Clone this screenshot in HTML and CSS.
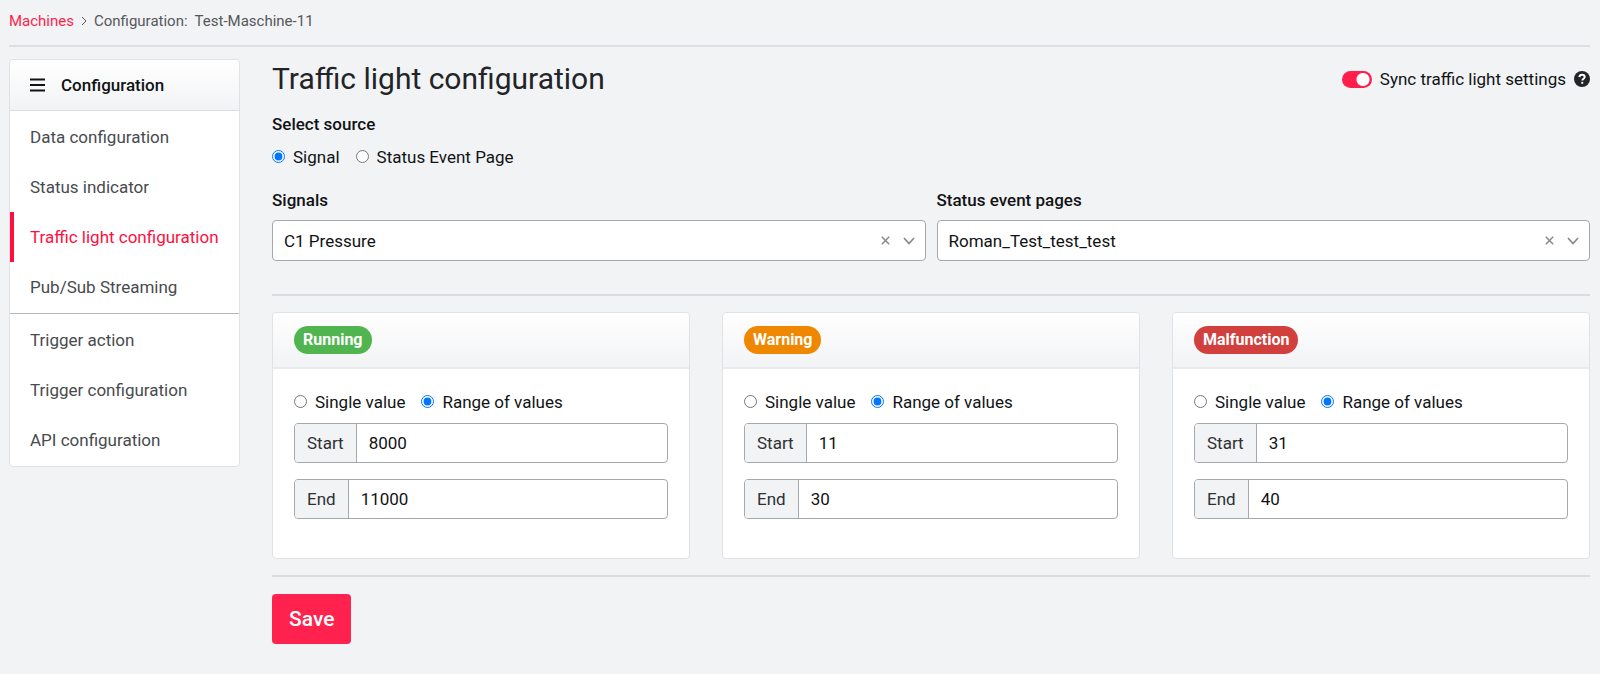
FILE: index.html
```html
<!DOCTYPE html>
<html lang="en">
<head>
<meta charset="utf-8">
<title>Traffic light configuration</title>
<link rel="stylesheet" href="styles.css">
</head>
<body>
<nav class="breadcrumb" aria-label="Breadcrumb">
  <a href="#">Machines</a>
  <svg class="crumb-arrow" viewBox="0 0 6 10" aria-hidden="true"><path d="M1 1l4 4-4 4"/></svg>
  <span>Configuration:</span>
  <span class="machine">Test-Maschine-11</span>
</nav>
<div class="layout">
  <aside class="sidebar">
    <div class="sidebar-head">
      <svg class="burger" viewBox="0 0 15 14" aria-hidden="true"><path d="M0 1.5h15M0 7h15M0 12.5h15"/></svg>
      <span>Configuration</span>
    </div>
    <nav class="menu">
      <a href="#">Data configuration</a>
      <a href="#">Status indicator</a>
      <a href="#" class="active" aria-current="page">Traffic light configuration</a>
      <a href="#">Pub/Sub Streaming</a>
    </nav>
    <nav class="menu menu-second">
      <a href="#">Trigger action</a>
      <a href="#">Trigger configuration</a>
      <a href="#">API configuration</a>
    </nav>
  </aside>
  <main class="content">
    <header class="title-row">
      <h1>Traffic light configuration</h1>
      <div class="sync">
        <label class="sync-label"><input type="checkbox" class="switch" checked><span>Sync traffic light settings</span></label>
        <button type="button" class="help" aria-label="Help"><svg viewBox="0 0 16 16" aria-hidden="true"><circle cx="8" cy="8" r="8"/><path d="M5.4 6.1C5.6 4.6 6.6 3.8 8 3.8c1.5 0 2.7.9 2.7 2.2 0 1.7-2.4 1.7-2.4 3.4"/><rect x="7.2" y="10.7" width="2.1" height="2.1" rx=".9"/></svg></button>
      </div>
    </header>
    <fieldset class="source">
      <legend>Select source</legend>
      <div class="radios">
        <label><input type="radio" name="source" checked>Signal</label>
        <label><input type="radio" name="source">Status Event Page</label>
      </div>
    </fieldset>
    <div class="selects">
      <div class="field">
        <label for="signals">Signals</label>
        <div class="select-wrap">
          <select id="signals"><option>C1 Pressure</option></select>
          <div class="indicators">
            <button type="button" aria-label="Clear signal"><svg class="clear" viewBox="0 0 9 9"><path stroke-width="1.5" d="M.8.8l7.4 7.4M8.2.8L.8 8.200"/></svg></button>
            <svg class="chevron" viewBox="0 0 12 8" aria-hidden="true"><path stroke-width="1.7" d="M1 1l5 5.5L11 1"/></svg>
          </div>
        </div>
      </div>
      <div class="field">
        <label for="pages">Status event pages</label>
        <div class="select-wrap">
          <select id="pages"><option>Roman_Test_test_test</option></select>
          <div class="indicators">
            <button type="button" aria-label="Clear page"><svg class="clear" viewBox="0 0 9 9"><path stroke-width="1.5" d="M.8.8l7.4 7.4M8.2.8L.8 8.200"/></svg></button>
            <svg class="chevron" viewBox="0 0 12 8" aria-hidden="true"><path stroke-width="1.7" d="M1 1l5 5.5L11 1"/></svg>
          </div>
        </div>
      </div>
    </div>
    <div class="cards">
      <section class="card">
        <header><h2 class="badge running">Running</h2></header>
        <div class="card-body">
          <div class="radios">
            <label><input type="radio" name="running">Single value</label>
            <label><input type="radio" name="running" checked>Range of values</label>
          </div>
          <div class="group"><label for="r-start">Start</label><input id="r-start" type="text" value="8000"></div>
          <div class="group"><label for="r-end">End</label><input id="r-end" type="text" value="11000"></div>
        </div>
      </section>
      <section class="card">
        <header><h2 class="badge warning">Warning</h2></header>
        <div class="card-body">
          <div class="radios">
            <label><input type="radio" name="warning">Single value</label>
            <label><input type="radio" name="warning" checked>Range of values</label>
          </div>
          <div class="group"><label for="w-start">Start</label><input id="w-start" type="text" value="11"></div>
          <div class="group"><label for="w-end">End</label><input id="w-end" type="text" value="30"></div>
        </div>
      </section>
      <section class="card">
        <header><h2 class="badge malfunction">Malfunction</h2></header>
        <div class="card-body">
          <div class="radios">
            <label><input type="radio" name="malfunction">Single value</label>
            <label><input type="radio" name="malfunction" checked>Range of values</label>
          </div>
          <div class="group"><label for="m-start">Start</label><input id="m-start" type="text" value="31"></div>
          <div class="group"><label for="m-end">End</label><input id="m-end" type="text" value="40"></div>
        </div>
      </section>
    </div>
    <button type="button" class="save">Save</button>
  </main>
</div>
</body>
</html>
```
FILE: styles.css
```css
* { box-sizing: border-box; }
body {
  margin: 0;
  padding: 0 10px 0 9px;
  background: #f2f3f5;
  color: #111315;
  font: 17px/24px Roboto, "Liberation Sans", sans-serif;
}
input, select, button { font: inherit; color: inherit; }
a { text-decoration: none; }
svg { display: block; fill: none; stroke: currentColor; }

.breadcrumb {
  display: flex;
  align-items: center;
  gap: 7px;
  height: 47px;
  padding-bottom: 3px;
  border-bottom: 2px solid #dcdee1;
  font-size: 15px;
  color: #55585b;
}
.breadcrumb a { color: #ff1f4b; }
.crumb-arrow { width: 6px; height: 10px; }

.layout {
  display: grid;
  grid-template-columns: 231px 1fr;
  align-items: start;
  gap: 32px;
  padding-top: 12px;
}
.sidebar {
  background: #fff;
  border: 1px solid #e0e2e5;
  border-radius: 4px;
}
.sidebar-head {
  display: flex;
  align-items: center;
  gap: 16px;
  height: 51px;
  padding: 0 20px;
  border-bottom: 1px solid #dcdee1;
  border-radius: 4px 4px 0 0;
  background: linear-gradient(#fff, #f2f3f5);
  font-weight: 500;
}
.burger { width: 15px; height: 14px; stroke-width: 2; }
.menu { padding: 1px 0; }
.menu-second { border-top: 1px solid #b5b8bb; }
.menu a {
  display: block;
  padding: 13px 16px;
  border-left: 4px solid transparent;
  color: #484b4e;
}
.menu .active { border-color: #ff0f40; color: #ff0f40; }

.title-row { display: flex; justify-content: space-between; align-items: center; height: 40px; }
h1 { margin: 0; font-size: 30px; line-height: 40px; font-weight: 400; color: #222427; }
.sync, .sync-label { display: flex; align-items: center; gap: 8px; }
.switch {
  appearance: none;
  width: 30px;
  height: 17px;
  margin: 0;
  border-radius: 9px;
  background: radial-gradient(circle at 21px 50%, #fff 6px, transparent 7px) #ff1f4b;
}
.help { border: 0; padding: 0; background: none; }
.help svg { width: 16px; height: 16px; }
.help circle, .help rect { stroke: none; fill: #222427; }
.help rect { fill: #fff; }
.help path { stroke: #fff; stroke-width: 2; }

.source { margin: 13px 0 0; padding: 0; border: 0; }
.source legend, .field > label { padding: 0; font-weight: 500; }
.source .radios { padding-top: 9px; }
.radios { display: flex; gap: 16px; }
.radios label { display: flex; align-items: center; gap: 8px; }
.radios input { width: 13px; height: 13px; margin: 0 0 2px; }

.selects { display: grid; grid-template-columns: 1fr 1fr; gap: 11px; padding-top: 19px; }
.field { display: grid; gap: 8px; }
.select-wrap { position: relative; }
.select-wrap select {
  appearance: none;
  display: block;
  width: 100%;
  height: 41px;
  padding: 0 60px 0 11px;
  border: 1px solid #a5a8ad;
  border-radius: 4px;
  background: #fff;
}
.indicators {
  position: absolute;
  inset: 0 11px 0 auto;
  display: flex;
  align-items: center;
  gap: 13px;
  color: #85898c;
}
.indicators button { padding: 0; border: 0; background: none; }
.clear { width: 9px; height: 9px; }
.chevron { width: 12px; height: 8px; }

.cards {
  display: grid;
  grid-template-columns: repeat(3, 1fr);
  gap: 32px;
  margin-top: 33px;
  padding: 16px 0;
  border: solid #dadde0;
  border-width: 2px 0;
}
.card { background: #fff; border: 1px solid #e0e2e5; border-radius: 4px; }
.card header {
  display: flex;
  align-items: center;
  height: 56px;
  padding: 0 21px;
  border-bottom: 2px solid #e9eaec;
  border-radius: 4px 4px 0 0;
  background: linear-gradient(#fff, #f2f3f5);
}
.badge { margin: 0; padding: 2px 9px; border-radius: 14px; font-size: 16px; line-height: 24px; font-weight: 700; color: #fff; }
.running { background: #50b54f; }
.warning { background: #f08700; }
.malfunction { background: #d2403e; }
.card-body { display: grid; gap: 16px; padding: 21px 21px 39px; }
.card-body .radios { margin-bottom: -7px; }
.group { display: flex; height: 40px; border: 1px solid #a5a8ad; border-radius: 4px; overflow: hidden; background: #fff; }
.group label { padding: 7px 12px; border-right: 1px solid #a5a8ad; background: #f2f3f5; color: #2e3134; }
.group input { flex: 1; min-width: 0; padding: 0 12px; border: 0; background: none; }

.save {
  margin: 17px 0 24px;
  padding: 10px 17px;
  border: 0;
  border-radius: 4px;
  background: #ff224e;
  color: #fff;
  font-size: 21px;
  line-height: 30px;
  font-weight: 500;
}
```
